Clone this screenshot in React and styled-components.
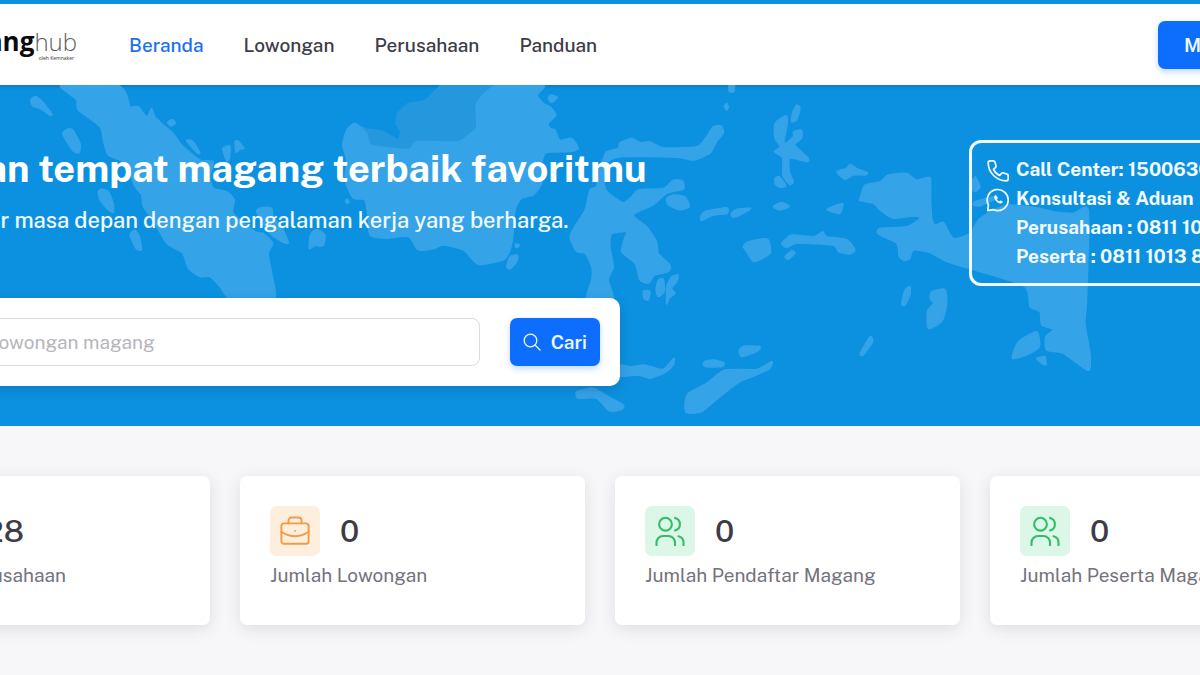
import React from "react";
import styled, { createGlobalStyle } from "styled-components";

const GlobalStyle = createGlobalStyle`
  *, *::before, *::after { box-sizing: border-box; }
  body {
    margin: 0;
    overflow-x: hidden;
    background: #f7f7fa;
    color: #3d3b47;
    font-family: "Public Sans", Inter, "Liberation Sans", sans-serif;
    font-size: 19px;
    line-height: 28px;
  }
  h1, p { margin: 0; }
`;

const Viewport = styled.div`
  overflow: hidden;
`;

const Page = styled.div`
  margin: 0 -150px;
`;

const Container = styled.div`
  padding: 0 15px;
`;

const Header = styled.header`
  border-top: 4px solid #0c91e0;
  background: #fff;
`;

const HeaderRow = styled(Container)`
  display: flex;
  align-items: center;
  height: 81px;
`;

const Logo = styled.a`
  width: 212px;
  color: #0b0b0b;
  font-family: "Open Sans", sans-serif;
  text-align: right;
  text-decoration: none;
  font-size: 26px;
  line-height: 26px;
  font-weight: 700;
`;

const LogoLight = styled.span`
  color: #5c5d61;
  font-size: 24px;
  font-weight: 300;
`;

const LogoNote = styled.small`
  display: block;
  padding-right: 3px;
  color: #333;
  font-size: 5px;
  line-height: 6px;
  font-weight: 400;
`;

const Nav = styled.nav`
  display: flex;
  gap: 40px;
  margin-left: 52px;
`;

const NavLink = styled.a`
  color: ${(p) => (p.$active ? "#1a70f0" : "#3d3b47")};
  font-weight: 500;
  text-decoration: none;
`;

const Button = styled.button`
  display: inline-flex;
  align-items: center;
  justify-content: center;
  gap: 10px;
  height: 48px;
  padding: 0 ${(p) => p.$pad}px;
  border: 0;
  border-radius: 7px;
  background: #0d6efd;
  box-shadow: 0 3px 6px rgba(13, 110, 253, 0.25);
  color: #eef8ff;
  font: inherit;
  font-weight: 600;
  white-space: nowrap;
`;

const LoginButton = styled(Button)`
  width: 177px;
  margin-left: auto;
  justify-content: flex-start;
`;

const Hero = styled.section`
  position: relative;
  padding: 55px 0 40px;
  background: #0c91e0;
  box-shadow: inset 0 3px 4px -2px rgba(0, 40, 80, 0.25);
`;

const MapDrawing = styled.svg`
  position: absolute;
  inset: 0;
  width: 100%;
  height: 100%;
  fill: #35a3e8;
`;

const HeroRow = styled(Container)`
  position: relative;
  display: flex;
  align-items: flex-start;
  justify-content: space-between;
`;

const HeroMain = styled.div`
  width: 755px;
`;

const HeroTitle = styled.h1`
  padding-top: 5px;
  color: #fff;
  font-size: 38px;
  line-height: 48px;
  font-weight: 700;
  white-space: nowrap;
`;

const HeroText = styled.p`
  margin-top: 13px;
  color: #f0faff;
  font-size: 22px;
  line-height: 28px;
  font-weight: 500;
  white-space: nowrap;
`;

const SearchCard = styled.form`
  display: flex;
  gap: 30px;
  margin-top: 64px;
  padding: 20px;
  border-radius: 10px;
  background: #fff;
  box-shadow: 0 4px 12px rgba(20, 50, 90, 0.22);
`;

const SearchInput = styled.input`
  flex: 1;
  min-width: 0;
  height: 48px;
  padding: 0 14px;
  border: 1px solid #dbdade;
  border-radius: 8px;
  background: #fff;
  color: #3d3b47;
  font: inherit;
  &::placeholder { color: #b6b5bb; opacity: 1; }
`;

const Contact = styled.address`
  width: 366px;
  padding: 12px 14px;
  border: 3px solid #f2fbff;
  border-radius: 12px;
  color: #f2fbff;
  font-style: normal;
  font-weight: 700;
  line-height: 29px;
`;

const ContactLine = styled.div`
  display: flex;
  align-items: center;
  gap: 6px;
  white-space: nowrap;
`;

const IconSlot = styled.span`
  display: flex;
  width: 24px;
  padding-top: 2px;
`;

const Stats = styled(Container)`
  display: grid;
  grid-template-columns: repeat(4, 1fr);
  gap: 30px;
  padding-top: 50px;
  padding-bottom: 50px;
`;

const StatCard = styled.article`
  padding: 30px;
  min-height: 149px;
  border-radius: 7px;
  background: #fff;
  box-shadow: 0 4px 16px rgba(50, 48, 60, 0.12);
`;

const StatTop = styled.div`
  display: flex;
  align-items: center;
  gap: 20px;
`;

const StatIcon = styled.span`
  display: grid;
  place-items: center;
  width: 50px;
  height: 50px;
  border-radius: 7px;
  background: ${(p) => p.$bg};
  color: ${(p) => p.$fg};
`;

const StatValue = styled.strong`
  font-size: 31px;
  line-height: 40px;
  font-weight: 500;
`;

const StatLabel = styled.p`
  margin-top: 5px;
  color: #74727c;
  white-space: nowrap;
`;

const stroke = {
  fill: "none",
  stroke: "currentColor",
  strokeLinecap: "round",
  strokeLinejoin: "round",
  "aria-hidden": true,
};

const PhoneIcon = () => (
  <svg width="24" height="24" viewBox="0 0 24 24" strokeWidth="1.7" {...stroke}>
    <path d="M2.2 3.8c0-1.200.8-1.900 1.900-1.900h3.200c.8 0 1.400.4 1.600 1.200l1.100 3.700c.2.700 0 1.300-.5 1.700L7.500 10.300c1.300 2.800 3.300 4.900 6.200 6.200l1.800-2.100c.4-.5 1-.7 1.700-.5l3.900 1.200c.7.200 1.100.7 1.100 1.500v3.200c0 1.200-.8 2-1.900 2C10.500 21.800 2.200 13.700 2.200 3.800Z" />
  </svg>
);

const WhatsappIcon = () => (
  <svg width="24" height="24" viewBox="0 0 24 24" strokeWidth="1.7" {...stroke}>
    <path d="M1.700 22.600l.7-5.700A10.500 10.500 0 1 1 7.400 21.600Z" />
    <path d="M9 7.800c-1.200 1.300-.4 3.500 1.300 5.300s4.200 2.800 5.700 1.700c.7-.5.700-1 .1-1.300l-1.500-.8-1.400.9c-1.200-.4-2-1.200-2.500-2.300l.8-1.200-.8-1.900c-.4-.8-1.100-.9-1.700-.4Z" fill="currentColor" strokeWidth=".5" />
  </svg>
);

const SearchIcon = () => (
  <svg width="18" height="18" viewBox="0 0 18 18" strokeWidth="1.300" {...stroke}>
    <circle cx="7.500" cy="7.500" r="6.300" />
    <path d="M12 12l5 5" />
  </svg>
);

const BriefcaseIcon = () => (
  <svg width="30" height="30" viewBox="0 0 30 30" strokeWidth="1.900" {...stroke}>
    <rect x="1.400" y="7.400" width="27.200" height="20.400" rx="2.600" />
    <path d="M8.500 7.400V4.500a3 3 0 0 1 3-3h7a3 3 0 0 1 3 3v2.900" />
    <path d="M1.400 15.800Q15 24.800 28.600 15.800" />
    <circle cx="15" cy="15" r=".3" strokeWidth="1.200" />
  </svg>
);

const UsersIcon = () => (
  <svg width="30" height="30" viewBox="0 0 30 30" strokeWidth="2.100" {...stroke}>
    <circle cx="10.500" cy="8.200" r="6.400" />
    <path d="M20 1.900a6.500 6.500 0 0 1 0 12.600" />
    <path d="M1.500 29.200v-2.700a6.500 6.500 0 0 1 6.500-6.500h5.500a6.500 6.500 0 0 1 6.500 6.500v2.700" />
    <path d="M23.500 20.300a6.500 6.500 0 0 1 5 6.200v2.700" />
  </svg>
);

/* Outlines of the islands, grouped by the region of the archipelago. */
const REGIONS = [
  {
    origin: "translate(0 80)",
    shapes: [
      "185,15 205,40 230,60 235,90 300,140 310,180 325,225 375,250 405,320 425,345 430,380 465,430 500,490 548,520 565,565 600,590 630,590 660,620 695,660 822,660 815,580 805,520 818,490 790,460 765,455 700,400 703,360 680,335 640,325 630,290 640,245 600,240 545,195 520,160 490,135 465,110 455,85 440,110 415,80 390,80 380,45 350,15",
      "92,60 105,50 125,62 155,100 150,106 125,88 98,78",
      "188,160 200,148 218,150 240,190 238,218 222,215 200,185",
      "502,128 515,118 527,128 515,138",
      "560,182 578,183 600,218 590,218",
      "668,205 690,198 688,235 680,243",
      "705,185 715,183 732,205 720,208 708,217",
      "295,335 305,327 325,335 340,370 340,397 325,390 300,360",
      "390,465 405,450 418,470 425,508 410,508",
      "770,395 785,383 815,385 820,410 850,450 865,490 840,482 800,450",
      "930,470 940,452 955,450 975,465 970,497 945,497 928,505",
      "1037,361 1043,358 1048,367 1040,371",
    ],
  },
  {
    origin: "translate(330 80)",
    shapes: [
      "75,130 110,160 125,195 235,208 260,185 380,185 415,165 440,140 440,70 500,15 640,15 622,45 640,70 660,80 678,105 655,130 660,145 675,150 690,180 725,175 745,205 720,215 650,218 635,250 635,310 610,345 575,355 555,390 550,460 540,510 520,540 445,553 400,510 340,495 315,505 265,510 235,470 165,475 120,465 115,420 105,360 70,355 45,300 50,240 38,195 50,150",
      "655,55 662,45 682,52 665,68",
      "530,560 540,530 563,525 560,545 540,567",
      "556,492 568,494 564,502 557,502",
      "820,235 830,215 865,205 870,188 905,175 930,188 960,185 1000,203 1100,200 1130,170 1150,140 1175,138 1180,160 1160,185 1140,220 1090,240 1040,232 880,230 835,245 820,290 828,330 850,350 880,368 905,350 925,330 1000,325 1030,300 1058,303 1060,328 1010,340 970,375 910,405 950,440 980,485 985,520 1020,555 1015,575 975,585 955,610 930,600 915,550 875,515 885,470 890,455 845,462 840,500 850,560 835,600 850,660 770,660 785,600 785,560 765,520 740,515 720,470 740,430 765,390 780,330 800,320 805,280",
      "1010,355 1030,345 1065,350 1078,380 1050,390 1015,375",
      "1112,410 1125,395 1190,383 1190,400 1140,405 1115,422",
      "985,600 1000,597 1003,635 985,650 978,630",
      "1025,590 1045,585 1040,605 1025,625 1035,640 1018,655 1010,672 1010,620",
      "940,632 960,635 955,660 942,655",
    ],
  },
  {
    origin: "translate(680 80)",
    shapes: [
      "147,15 163,15 162,35 148,35",
      "133,78 140,70 145,82 139,90",
      "350,75 360,85 350,120 335,125 337,100",
      "285,130 318,107 322,130 312,190 340,170 340,155 365,150 365,175 345,195 385,235 380,245 330,235 328,275 340,305 328,313 308,285 308,235 283,215 300,200 285,175",
      "285,295 298,290 318,318 300,322 285,312",
      "470,275 500,265 510,253 530,265 563,278 555,285 520,285 495,298",
      "280,380 305,367 328,380 300,390",
      "442,387 488,370 480,400 455,395",
      "62,410 80,393 100,397 135,382 142,400 100,405 68,420",
      "153,402 170,388 212,385 190,400 160,412",
      "190,500 205,485 262,477 270,520 222,545 200,515",
      "305,490 335,465 400,470 428,455 440,470 500,478 525,510 510,522 475,515 460,495 350,490 320,503",
      "315,530 335,512 345,520 325,538",
      "540,355 555,315 600,305 625,285 680,280 710,300 750,292 752,350 755,410 765,435 790,427 820,475 870,460 900,415 980,375 1080,385 1120,395 1180,400 1225,392 1220,660 1215,730 1230,820 1225,872 1150,820 1100,810 1097,770 1120,748 1085,735 1080,695 1050,680 1035,620 900,575 800,545 750,518 700,510 690,535 675,542 658,530 650,490 595,462 600,445 680,440 720,415 700,408 640,415 600,390 580,370 540,362",
      "885,290 900,320 885,335 870,320",
      "885,365 940,350 940,360 900,378 880,375",
    ],
  },
  {
    origin: "translate(780 230)",
    shapes: [
      "390,170 390,195 375,225 365,222 375,180",
      "455,185 495,178 500,225 485,275 445,295 442,245 460,220 450,205",
      "270,320 278,335 250,375 240,370",
      "770,305 778,350 740,375 697,385 715,335",
      "770,385 795,380 798,405 785,400",
    ],
  },
  {
    origin: "translate(400 250)",
    shapes: [
      "660,345 690,350 730,345 755,350 790,358 822,325 820,345 800,365 750,385 715,375 660,378",
      "530,425 580,415 625,440 670,465 665,478 628,483 590,445 535,445",
      "1018,300 1035,288 1080,290 1070,305 1025,320",
      "912,335 940,330 972,338 965,350 915,350",
      "855,460 865,430 920,400 975,360 1070,358 1115,335 1110,355 1070,375 1020,395 960,440 905,485 860,488",
    ],
  },
];

const NORTH_BORNEO =
  "75,130 110,145 155,150 205,178 210,155 195,130 200,100 230,70 285,60 330,15 500,15 440,70 440,140 415,165 380,185 260,185 235,208 125,200";

/* Closed curve that runs smoothly through every point of a coastline. */
function coastline(points) {
  const p = points.split(" ").map((pair) => pair.split(",").map(Number));
  const at = (i) => p[(i + p.length) % p.length];
  const bend = 0.11;
  let d = `M${p[0].join(" ")}`;
  p.forEach((from, i) => {
    const [before, to, after] = [at(i - 1), at(i + 1), at(i + 2)];
    const c1 = from.map((v, k) => v + (to[k] - before[k]) * bend);
    const c2 = to.map((v, k) => v - (after[k] - from[k]) * bend);
    d += `C${c1.join(" ")} ${c2.join(" ")} ${to.join(" ")}`;
  });
  return `${d}Z`;
}

const IslandMap = () => (
  <MapDrawing viewBox="-150 85 1500 341" preserveAspectRatio="xMidYMin slice" aria-hidden="true">
    <g transform="translate(330 80) scale(.33333)" fill="#2597dc">
      <polygon points={NORTH_BORNEO} />
    </g>
    {REGIONS.map((region) => (
      <g
        key={region.origin}
        transform={`${region.origin} scale(.33333)`}
        stroke="#35a3e8"
        strokeWidth="4"
        strokeLinejoin="round"
      >
        {region.shapes.map((points) => (
          <path key={points} d={coastline(points)} />
        ))}
      </g>
    ))}
  </MapDrawing>
);

const NAV = ["Beranda", "Lowongan", "Perusahaan", "Panduan"];

const GREEN = { bg: "#dcf6e7", fg: "#32bd6b" };
const ORANGE = { bg: "#feeede", fg: "#f29a45" };

const STATS = [
  { value: "328", label: "Jumlah Perusahaan", tone: ORANGE, Icon: BriefcaseIcon },
  { value: "0", label: "Jumlah Lowongan", tone: ORANGE, Icon: BriefcaseIcon },
  { value: "0", label: "Jumlah Pendaftar Magang", tone: GREEN, Icon: UsersIcon },
  { value: "0", label: "Jumlah Peserta Magang", tone: GREEN, Icon: UsersIcon },
];

export default function App() {
  return (
    <Viewport>
      <GlobalStyle />
      <Page>
        <Header>
          <HeaderRow>
            <Logo href="#">
              magang<LogoLight>hub</LogoLight>
              <LogoNote>oleh Kemnaker</LogoNote>
            </Logo>
            <Nav>
              {NAV.map((item, i) => (
                <NavLink key={item} href="#" $active={i === 0}>
                  {item}
                </NavLink>
              ))}
            </Nav>
            <LoginButton type="button" $pad={26}>
              Masuk / Daftar
            </LoginButton>
          </HeaderRow>
        </Header>
        <main>
          <Hero>
            <IslandMap />
            <HeroRow>
              <HeroMain>
                <HeroTitle>Temukan tempat magang terbaik favoritmu</HeroTitle>
                <HeroText>Bangun karier masa depan dengan pengalaman kerja yang berharga.</HeroText>
                <SearchCard onSubmit={(e) => e.preventDefault()}>
                  <SearchInput aria-label="Cari nama lowongan magang" placeholder="Cari nama lowongan magang" />
                  <Button type="submit" $pad={13}>
                    <SearchIcon />
                    Cari
                  </Button>
                </SearchCard>
              </HeroMain>
              <Contact>
                <ContactLine>
                  <IconSlot><PhoneIcon /></IconSlot>
                  Call Center: 1500630
                </ContactLine>
                <ContactLine>
                  <IconSlot><WhatsappIcon /></IconSlot>
                  Konsultasi &amp; Aduan
                </ContactLine>
                <ContactLine>
                  <IconSlot />
                  Perusahaan : 0811 1013 8
                </ContactLine>
                <ContactLine>
                  <IconSlot />
                  Peserta : 0811 1013 8
                </ContactLine>
              </Contact>
            </HeroRow>
          </Hero>
          <Stats>
            {STATS.map(({ value, label, tone, Icon }) => (
              <StatCard key={label}>
                <StatTop>
                  <StatIcon $bg={tone.bg} $fg={tone.fg}>
                    <Icon />
                  </StatIcon>
                  <StatValue>{value}</StatValue>
                </StatTop>
                <StatLabel>{label}</StatLabel>
              </StatCard>
            ))}
          </Stats>
        </main>
      </Page>
    </Viewport>
  );
}
